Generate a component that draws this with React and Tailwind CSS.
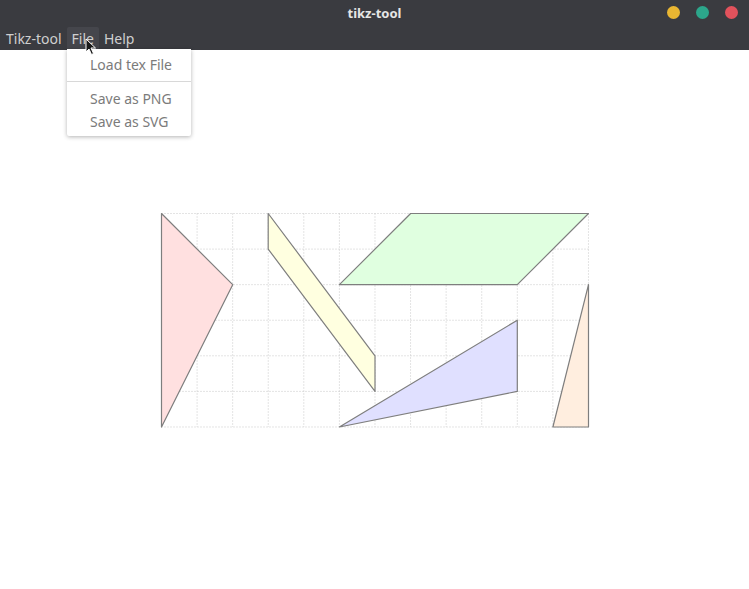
import React from 'react';

const U = 35.58;
const P = (x, y) => `${(x * U).toFixed(1)},${(y * U).toFixed(1)}`;

const shapes = [
  { pts: [[0, 0], [2, 2], [0, 6]], fill: '#ffe0e0' },
  { pts: [[3, 0], [6, 4], [6, 5], [3, 1]], fill: '#ffffe0' },
  { pts: [[7, 0], [12, 0], [10, 2], [5, 2]], fill: '#e0ffe0' },
  { pts: [[5, 6], [10, 3], [10, 5]], fill: '#e0e0ff' },
  { pts: [[11, 6], [12, 2], [12, 6]], fill: '#ffeedf' },
];

function Diagram() {
  return (
    <svg width="434" height="218" viewBox="-1.5 -1.5 434 218">
      {Array.from({ length: 13 }).map((_, i) => (
        <line key={'v' + i} x1={i * U} y1={0} x2={i * U} y2={6 * U} stroke="#c8c8c8" strokeWidth="1" strokeDasharray="1 2" />
      ))}
      {Array.from({ length: 7 }).map((_, i) => (
        <line key={'h' + i} x1={0} y1={i * U} x2={12 * U} y2={i * U} stroke="#c8c8c8" strokeWidth="1" strokeDasharray="1 2" />
      ))}
      {shapes.map((s, i) => (
        <polygon key={i} points={s.pts.map(([x, y]) => P(x, y)).join(' ')} fill={s.fill} stroke="#7e7e7e" strokeWidth="1.2" strokeLinejoin="round" />
      ))}
    </svg>
  );
}

export default function App() {
  const font = { fontFamily: '"Noto Sans", "Open Sans", sans-serif' };
  return (
    <div className="w-[749px] h-[589px] bg-white relative overflow-hidden" style={font}>
      {/* title bar */}
      <div className="h-[26px] bg-[#3a3b40] flex items-center justify-center relative">
        <span className="text-[13px] font-bold text-[#e6e6e6] leading-none">tikz-tool</span>
        <div className="absolute right-[11px] top-[6px] flex gap-[16px]">
          <span className="w-[13px] h-[13px] rounded-full bg-[#e9b632]" />
          <span className="w-[13px] h-[13px] rounded-full bg-[#2ca68b]" />
          <span className="w-[13px] h-[13px] rounded-full bg-[#e2525c]" />
        </div>
      </div>
      {/* menubar */}
      <div className="h-[24px] bg-[#3a3b40] flex items-center pl-[1px] text-[14px] text-[#cfcfcf]">
        <span className="px-[5px] leading-[22px] pt-[1px]">Tikz-tool</span>
        <span className="px-[5px] leading-[22px] pt-[1px] bg-[#45464c] rounded-[2px]">File</span>
        <span className="px-[5px] leading-[22px] pt-[1px]">Help</span>
      </div>

      <div className="pt-[162px] pl-[160px]">
        <Diagram />
      </div>

      {/* dropdown */}
      <div className="absolute left-[67px] top-[49px] w-[124px] bg-white shadow-[0_1px_4px_rgba(0,0,0,0.3)] rounded-b-[2px] pt-[3px] pb-[3px] text-[14px] text-[#7b7b7b]">
        <div className="pl-[23px] h-[24px] flex items-center">Load tex File</div>
        <div className="mt-[5px] mb-[4px] h-px bg-[#d8d8d8]" />
        <div className="pl-[23px] h-[24px] flex items-center">Save as PNG</div>
        <div className="pl-[23px] h-[23px] flex items-center">Save as SVG</div>
      </div>

      {/* cursor */}
      <svg className="absolute left-[85px] top-[38px]" width="12" height="18" viewBox="0 0 12 18">
        <path d="M1 1 L1 14 L4 11 L6.5 16.5 L8.5 15.5 L6 10 L10.5 10 Z" fill="#1a1a1a" stroke="#ffffff" strokeWidth="1" />
      </svg>
    </div>
  );
}
